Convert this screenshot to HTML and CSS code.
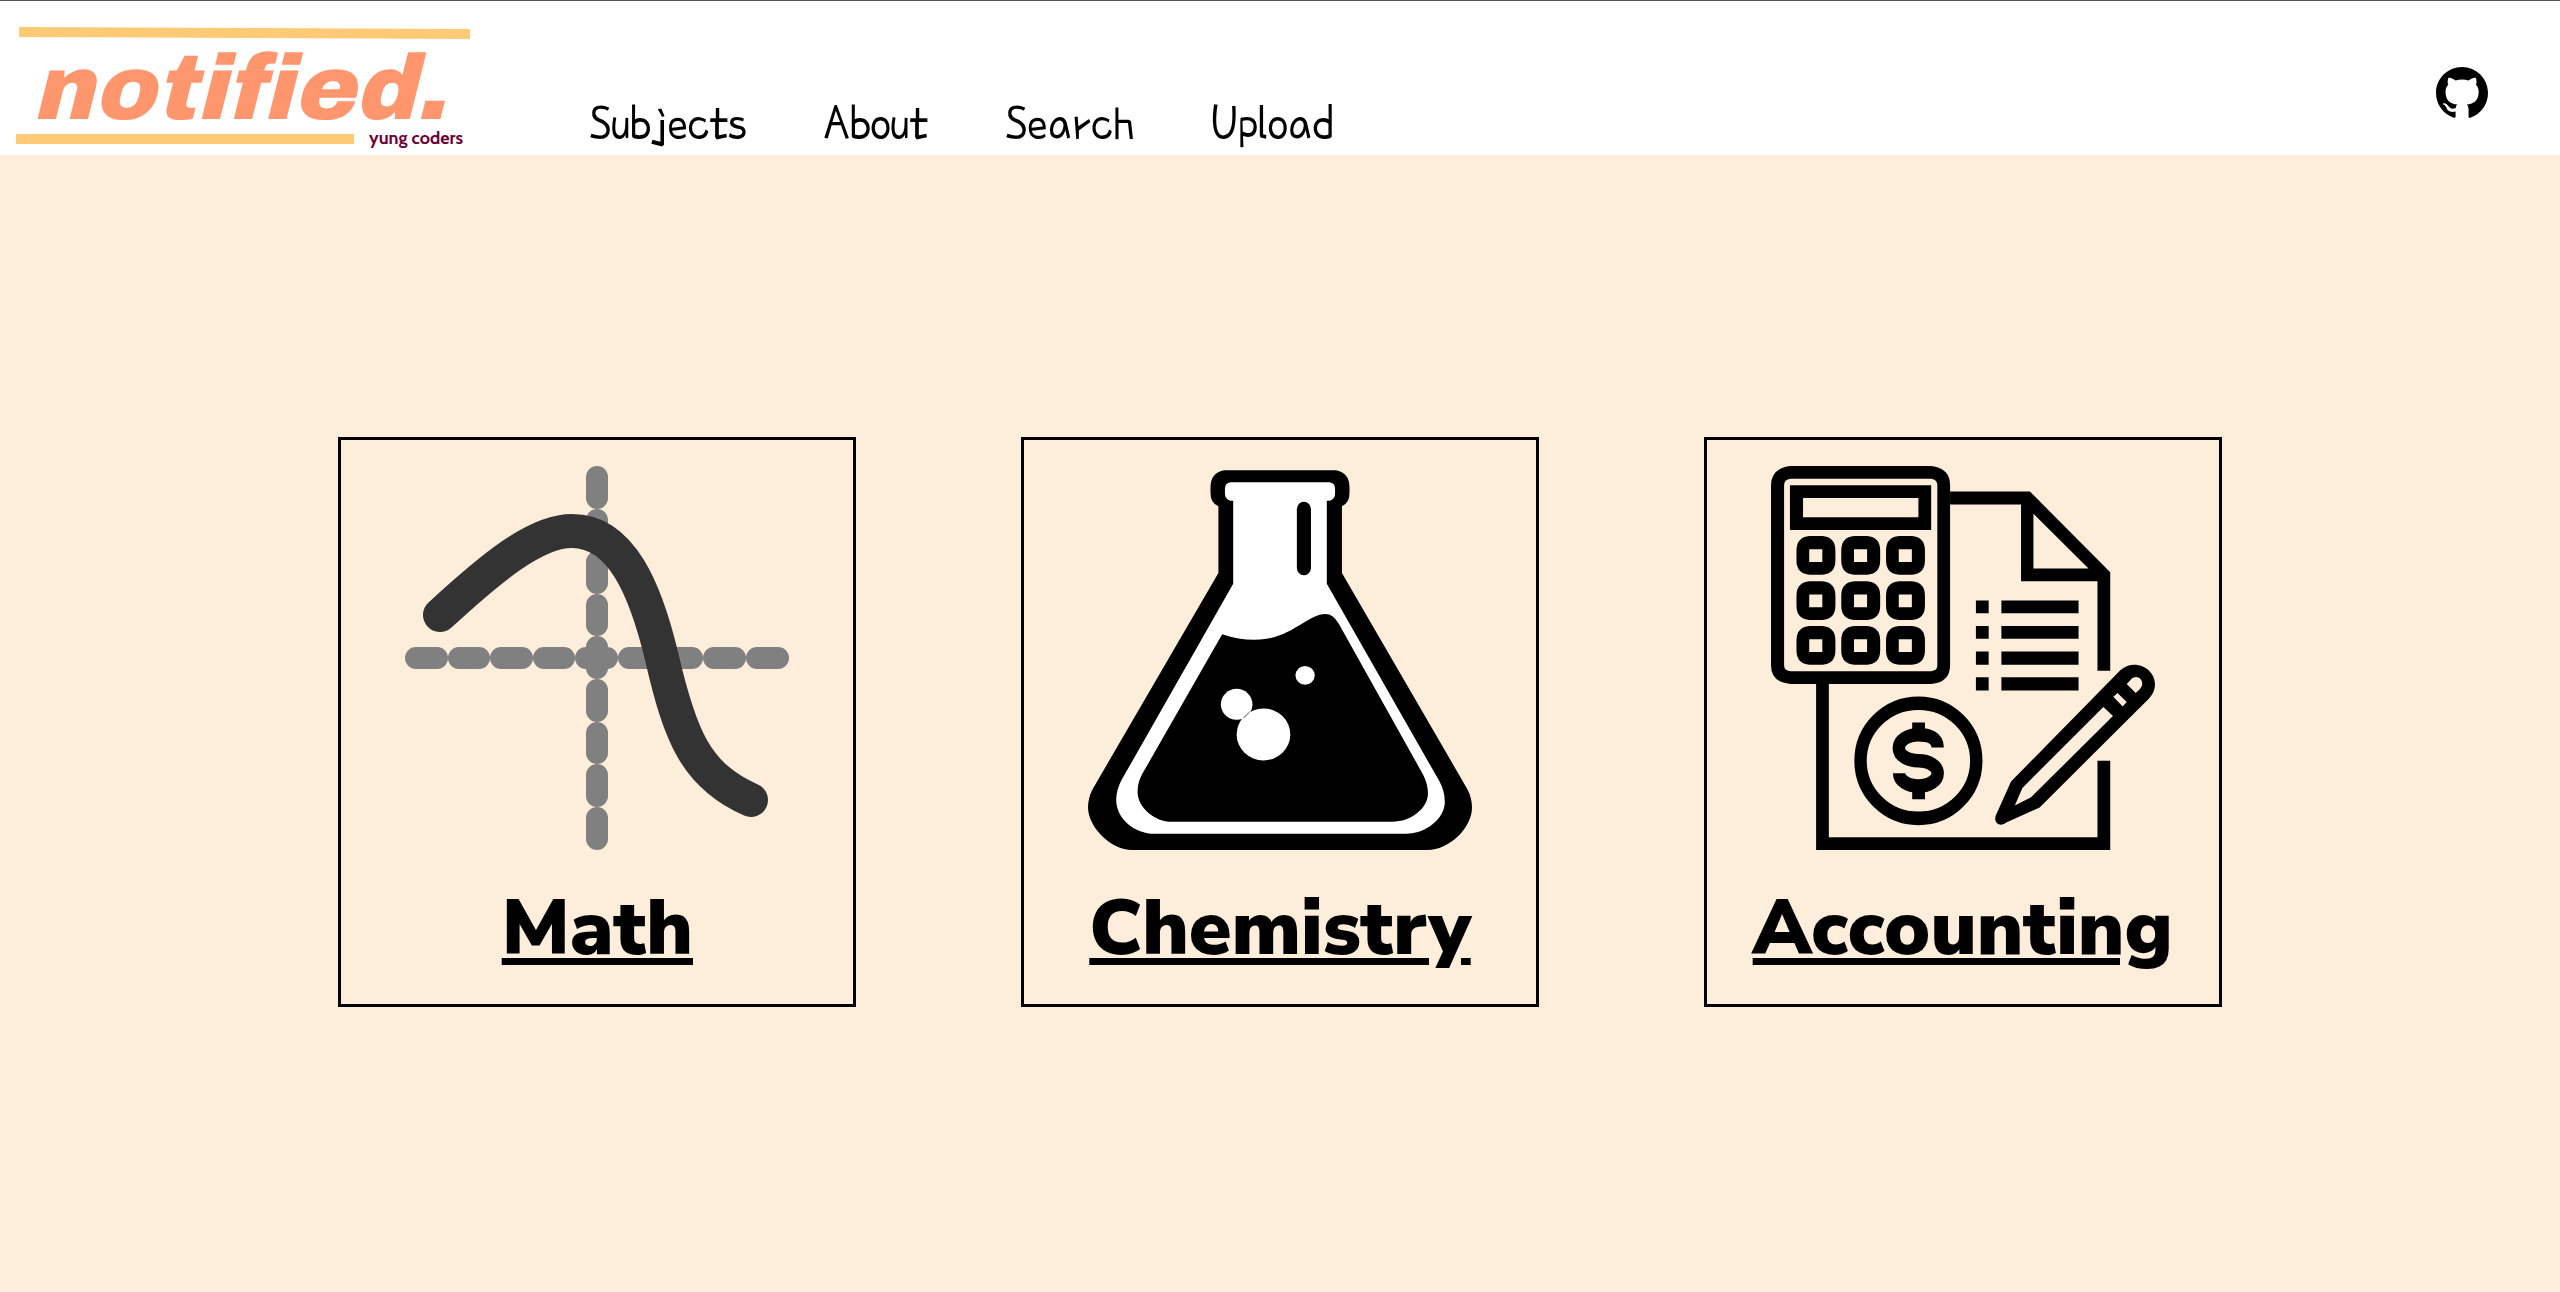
FILE: index.html
```html
<!DOCTYPE html>
<html lang="en">
<head>
  <meta charset="utf-8">
  <meta name="viewport" content="width=device-width, initial-scale=1">
  <title>notified.</title>
  <link rel="stylesheet" href="styles.css">
</head>
<body>
  <header class="site-header">
    <a class="logo" href="#" aria-label="notified. by yung coders">
      <svg class="logo-art" viewBox="0 0 480 154" width="480" height="154">
        <path class="logo-bar" d="M19 26 L470 28 V38 L19 36 Z M16 133 H354 V143 H16 Z"/>
        <text class="logo-name" x="32" y="118">notified.</text>
        <text class="logo-team" x="369" y="143">yung coders</text>
      </svg>
    </a>
    <nav class="site-nav">
      <a href="#">Subjects</a>
      <a href="#">About</a>
      <a href="#">Search</a>
      <a href="#">Upload</a>
    </nav>
    <a class="github" href="#" aria-label="GitHub">
      <svg viewBox="0 0 16 16" width="52" height="52">
        <path d="M8 0C3.58 0 0 3.58 0 8c0 3.54 2.29 6.53 5.47 7.59.2.04.45.02.55-.1V13.72c-2.01.37-2.53-.49-2.69-.94-.09-.23-.48-.94-.82-1.13-.28-.15-.68-.52-.01-.53.63-.01 1.08.58 1.23.82.72 1.21 1.87.87 2.33.66.07-.52.28-.87.51-1.07-1.78-.2-3.64-.89-3.64-3.95 0-.87.31-1.59.82-2.15-.08-.2-.36-1.02.08-2.12 0 0 .67-.21 2.2.82.64-.18 1.32-.27 2-.27s1.36.09 2 .27c1.53-1.04 2.2-.82 2.2-.82.44 1.1.16 1.92.08 2.12.51.56.82 1.27.82 2.15 0 3.07-1.87 3.75-3.65 3.95.29.25.54.73.54 1.48V15.5c.1.12.3.14.54.09A8.01 8.01 0 0 0 16 8c0-4.42-3.58-8-8-8z"/>
      </svg>
    </a>
  </header>

  <main class="subjects">
    <div class="subject-grid">
      <a class="card" href="#">
        <svg class="card-icon" viewBox="0 0 384 384">
          <g fill="#808080">
            <rect x="0" y="181" width="43" height="22" rx="11"/>
            <rect x="43" y="181" width="42" height="22" rx="11"/>
            <rect x="85" y="181" width="43" height="22" rx="11"/>
            <rect x="128" y="181" width="42" height="22" rx="11"/>
            <rect x="170" y="181" width="43" height="22" rx="11"/>
            <rect x="213" y="181" width="42" height="22" rx="11"/>
            <rect x="255" y="181" width="43" height="22" rx="11"/>
            <rect x="298" y="181" width="43" height="22" rx="11"/>
            <rect x="341" y="181" width="43" height="22" rx="11"/>
            <rect x="181" y="0" width="22" height="43" rx="11"/>
            <rect x="181" y="43" width="22" height="42" rx="11"/>
            <rect x="181" y="85" width="22" height="43" rx="11"/>
            <rect x="181" y="128" width="22" height="42" rx="11"/>
            <rect x="181" y="170" width="22" height="43" rx="11"/>
            <rect x="181" y="213" width="22" height="43" rx="11"/>
            <rect x="181" y="256" width="22" height="42" rx="11"/>
            <rect x="181" y="298" width="22" height="43" rx="11"/>
            <rect x="181" y="341" width="22" height="43" rx="11"/>
          </g>
          <path d="M35 149C85 103 130 65 167 65C217 65 241 125 257 192C275 270 291 310 346 334" fill="none" stroke="#333" stroke-width="34" stroke-linecap="round"/>
        </svg>
        <h2 class="card-title">Math</h2>
      </a>

      <a class="card" href="#">
        <svg class="card-icon" viewBox="226 98 1116 1020" preserveAspectRatio="none">
          <path d="M622 109H946Q986 115 986 155V170Q986 197 964 205V382L1329 957Q1342 980 1342 1005C1342 1060 1275 1118 1212 1118H355C290 1118 226 1055 226 1005Q226 980 239 957L605 382V205Q582 197 582 170V155Q582 115 622 109Z"/>
          <path fill="#fff" d="M640 141H928Q944 143 944 158V172Q944 188 928 190H920V411L1247 935Q1263 962 1263 990C1263 1035 1208 1075 1150 1075H420C362 1075 308 1035 308 985Q308 960 323 933L648 411V190H640Q624 188 624 172V158Q624 143 640 141Z"/>
          <path d="M616 545C662 559 705 563 745 557C825 545 870 491 916 491Q938 491 954 516L1200 918Q1214 943 1214 968C1214 1007 1165 1043 1110 1043H470C420 1043 370 1005 370 963Q370 940 383 917Z"/>
          <rect x="833" y="193" width="41" height="195" rx="20"/>
          <g fill="#fff">
            <ellipse cx="857" cy="654" rx="28" ry="25"/>
            <ellipse cx="736" cy="811" rx="78" ry="69"/>
            <ellipse cx="658" cy="731" rx="46" ry="41"/>
          </g>
          <path d="M679 767Q686 759 695 752" fill="none" stroke="#000" stroke-width="2"/>
        </svg>
        <h2 class="card-title">Chemistry</h2>
      </a>

      <a class="card" href="#">
        <svg class="card-icon" viewBox="235 98 1115 1020" preserveAspectRatio="none">
          <defs>
            <path id="key" fill-rule="evenodd" d="M38 0H75Q113 3 113 38V65Q113 100 75 103H38Q0 100 0 65V38Q0 3 38 0ZM37 35V69H75V35Z"/>
          </defs>
          <g fill-rule="evenodd">
            <path d="M291 98H700Q755 104 755 149V627Q755 672 700 677H291Q235 672 235 627V149Q235 104 291 98ZM291 132Q273 134 273 149V627Q273 641 291 643H700Q718 641 718 627V149Q718 134 700 132Z"/>
            <path d="M290 149H700V268H290ZM328 183V234H663V183Z"/>
            <path d="M755 166H987L1220 380V642H1183V404H961V200H755ZM997 225V370H1157Z"/>
            <path d="M366 677H403V1084H1183V881H1220V1118H366Z"/>
            <path d="M830 455H867V489H830ZM904 455H1128V489H904ZM830 523H867V557H830ZM904 523H1128V557H904ZM830 591H867V626H830ZM904 591H1128V626H904ZM830 659H867V694H830ZM904 659H1128V694H904Z"/>
            <path d="M645 779H682V812H645ZM645 950H682V983H645Z"/>
            <path d="M886 1035Q886 1029 889 1024L932 936L1250 640C1290 608 1350 635 1350 678Q1350 700 1332 716L1015 1005L918 1045C902 1057 886 1048 886 1035ZM943 1000L990 978L1228 762L1200 738L965 953ZM1229 711L1256 737L1268 725L1241 701ZM1268 677L1294 701Q1313 687 1313 677C1313 660 1294 652 1280 665Z"/>
          </g>
          <g fill="none" stroke="#000" stroke-width="36">
            <ellipse cx="663" cy="881" rx="168" ry="153"/>
            <path d="M719 846C719 820 694 812 663 812C632 812 606 827 606 847C606 867 632 881 663 881C694 881 719 895 719 914C719 934 694 948 663 948C632 948 607 934 607 914"/>
          </g>
          <use href="#key" x="309" y="284"/>
          <use href="#key" x="439" y="284"/>
          <use href="#key" x="569" y="284"/>
          <use href="#key" x="309" y="404"/>
          <use href="#key" x="439" y="404"/>
          <use href="#key" x="569" y="404"/>
          <use href="#key" x="309" y="523"/>
          <use href="#key" x="439" y="523"/>
          <use href="#key" x="569" y="523"/>
        </svg>
        <h2 class="card-title">Accounting</h2>
      </a>
    </div>
  </main>
</body>
</html>
```
FILE: styles.css
```css
* {
  box-sizing: border-box;
}

body {
  margin: 0;
  min-height: 100vh;
  display: flex;
  flex-direction: column;
  background: #fdeddb;
  color: #000;
  font-family: "Nunito Sans", "Open Sans", sans-serif;
}

a {
  color: inherit;
}

.site-header {
  display: flex;
  align-items: center;
  border-top: 1px solid #555;
  padding-right: 72px;
  background: #fff;
}

.logo-art {
  display: block;
}

.logo-bar {
  fill: #ffca75;
}

.logo-name {
  fill: #ff966e;
  font: italic 400 92px "Archivo Black", "DejaVu Sans", sans-serif;
  font-variant-ligatures: none;
}

.logo-team {
  fill: #6f0033;
  font: 700 18px Cabin, Lato, sans-serif;
}

.site-nav {
  flex: 1;
  align-self: flex-end;
  display: flex;
  flex-wrap: wrap;
  gap: 77px;
  padding: 0 0 4px 109px;
  font: 51px/56px "Poor Story", "Roboto Condensed", sans-serif;
}

.site-nav a {
  text-decoration: none;
}

.github {
  align-self: flex-end;
  padding-bottom: 36px;
}

.github svg {
  display: block;
}

.subjects {
  flex: 1;
  display: flex;
  align-items: center;
  justify-content: center;
  padding-bottom: 3px;
}

.subject-grid {
  width: 80%;
  display: grid;
  grid-template-columns: repeat(3, 1fr);
  justify-items: center;
}

.card {
  width: 100%;
  max-width: 518px;
  padding: 26px 48px 25px;
  border: 3px solid #000;
  display: flex;
  flex-direction: column;
  align-items: center;
  text-decoration: none;
}

.card-icon {
  width: 100%;
  max-width: 384px;
  aspect-ratio: 1;
}

.card-title {
  margin: 29px 0 0;
  font-size: 77px;
  line-height: 100px;
  font-weight: 900;
  text-decoration: underline;
}
```
